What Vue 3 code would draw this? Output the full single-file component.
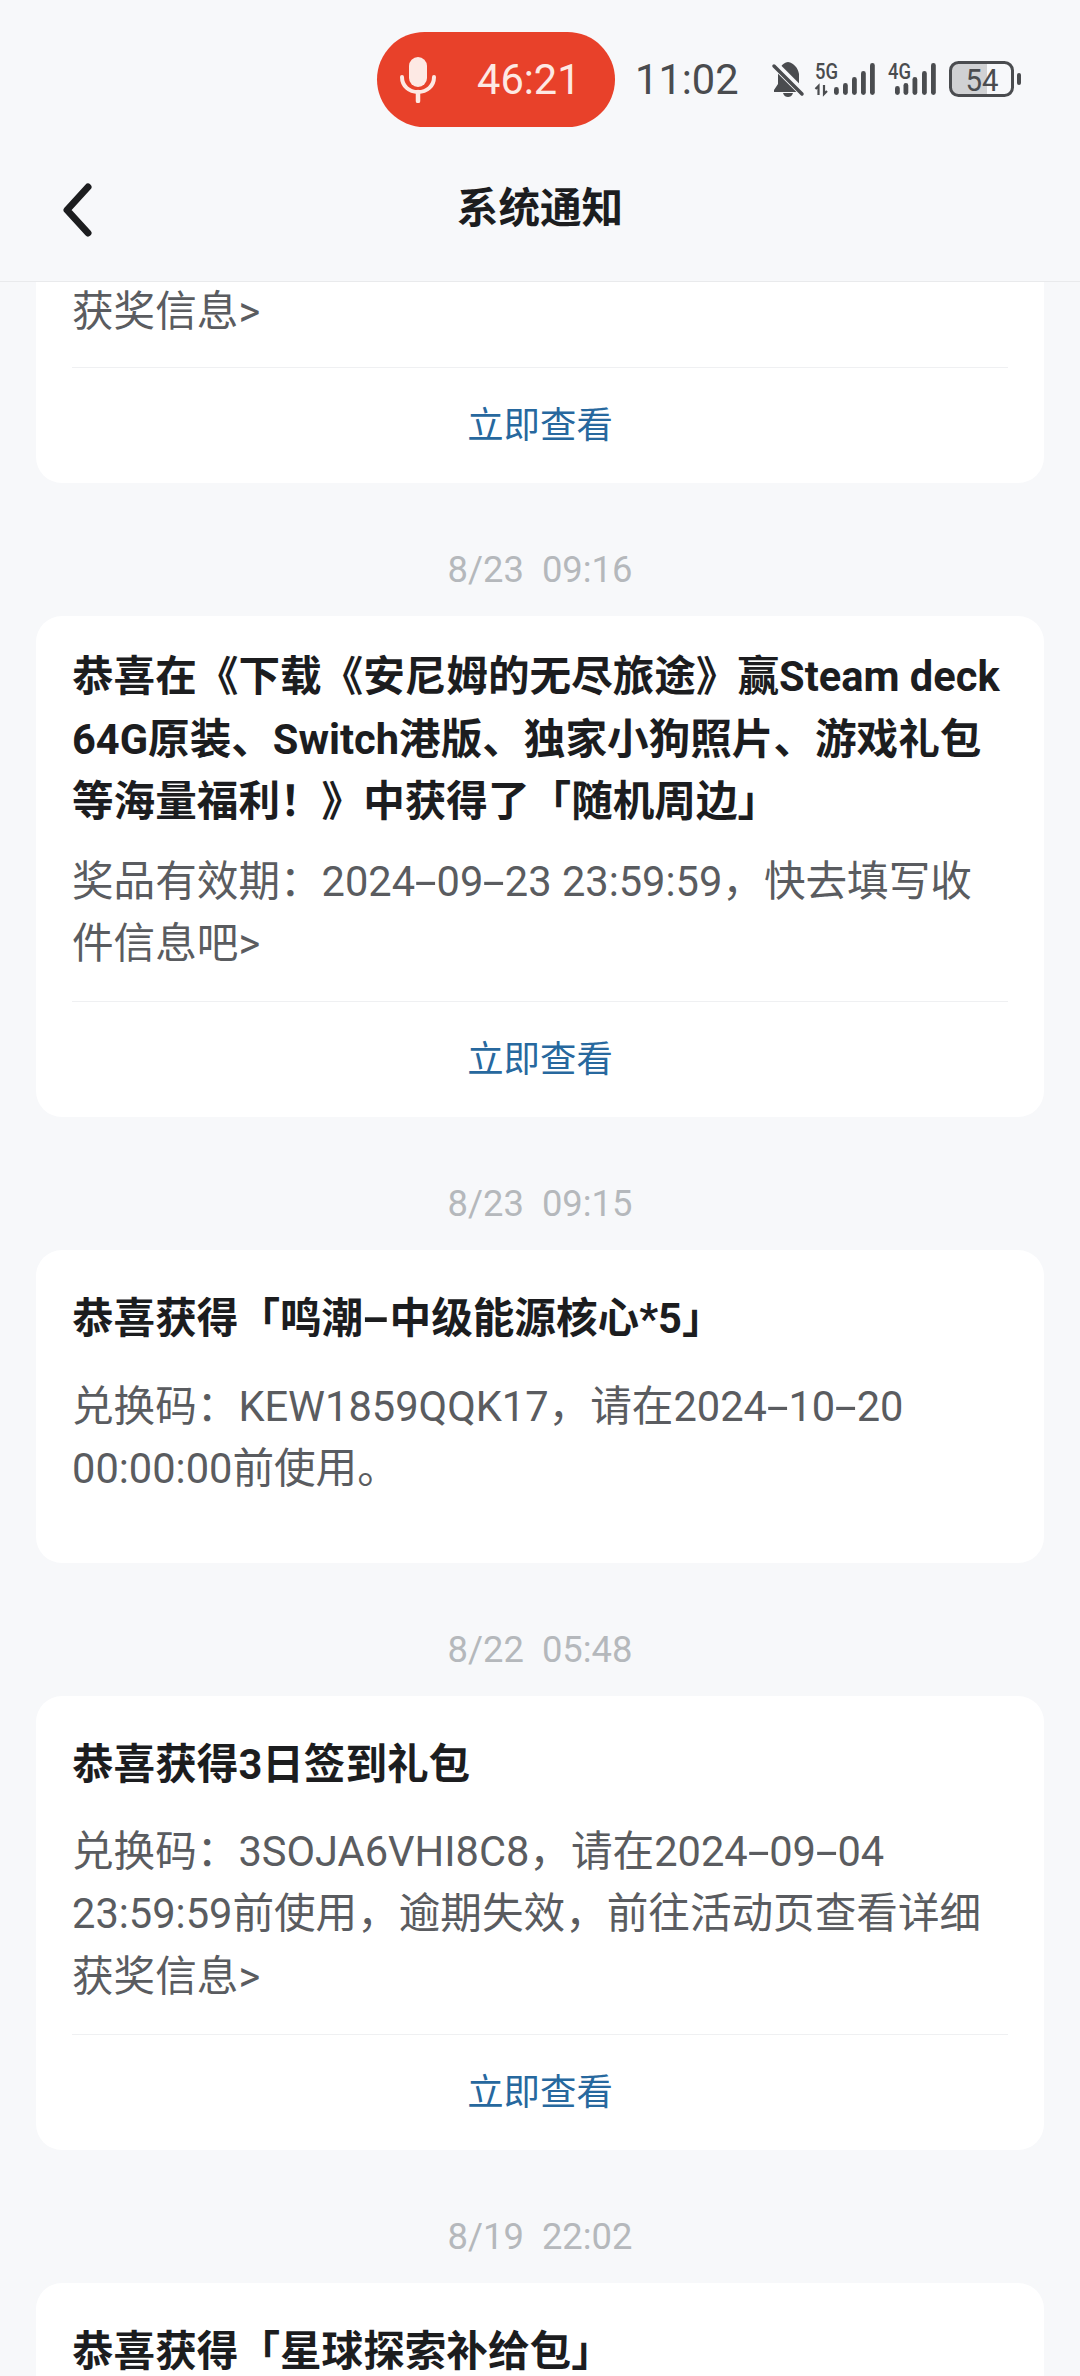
<template>
  <div class="page">
    <div class="top">
      <div class="status">
        <div class="rec">
          <svg class="mic" width="36" height="46" viewBox="0 0 36 46">
            <rect x="9" y="0" width="18" height="30" rx="9" fill="#fde9e4" />
            <path d="M2 20c0 9 7 15 16 15s16-6 16-15" fill="none" stroke="#fde9e4" stroke-width="4" stroke-linecap="round" />
            <path d="M18 35v9" stroke="#fde9e4" stroke-width="4.500" stroke-linecap="round" />
          </svg>
          <span class="rec-time">46:21</span>
        </div>
        <span class="clock">11:02</span>
        <svg class="icons" width="252" height="40" viewBox="0 0 252 40">
          <!-- bell muted -->
          <path d="M18 2c6 1 10 6 11 12v10l4 6v2H4v-2l4-6V14c1-6 4-11 10-12z" fill="#4a4c4f" />
          <path d="M13 33h10c-1 3-3 4-5 4s-4-1-5-4z" fill="#4a4c4f" />
          <path d="M0 0l36 36" stroke="#f7f8fa" stroke-width="8" />
          <path d="M4 6l28 28" stroke="#4a4c4f" stroke-width="3.500" stroke-linecap="round" />
          <!-- 5g + bars -->
          <text x="45" y="19" textLength="23" lengthAdjust="spacingAndGlyphs" class="net">5G</text>
          <path d="M48.500 35v-9l-3 3M54 25v9l3-3" fill="none" stroke="#4a4c4f" stroke-width="2.200" />
          <rect x="64" y="27" width="4.800" height="8" rx="2.400" fill="#4a4c4f" />
          <rect x="73" y="23" width="4.800" height="12" rx="2.400" fill="#4a4c4f" />
          <rect x="82" y="17" width="4.800" height="18" rx="2.400" fill="#4a4c4f" />
          <rect x="91" y="11" width="4.800" height="24" rx="2.400" fill="#4a4c4f" />
          <rect x="100" y="3" width="4.800" height="32" rx="2.400" fill="#4a4c4f" />
          <!-- 4g + bars -->
          <text x="118" y="19" textLength="23" lengthAdjust="spacingAndGlyphs" class="net">4G</text>
          <rect x="125" y="26" width="4.800" height="9" rx="2.400" fill="#4a4c4f" />
          <rect x="133.500" y="23" width="4.800" height="12" rx="2.400" fill="#4a4c4f" />
          <rect x="142.500" y="17" width="4.800" height="18" rx="2.400" fill="#4a4c4f" />
          <rect x="152" y="11" width="4.800" height="24" rx="2.400" fill="#4a4c4f" />
          <rect x="161" y="3" width="4.800" height="32" rx="2.400" fill="#4a4c4f" />
          <!-- battery -->
          <path d="M186 2.500h31v33h-31a6 6 0 0 1-6-6v-21a6 6 0 0 1 6-6z" fill="#d0d1d3" />
          <rect x="180.500" y="2.500" width="62" height="33" rx="8" fill="none" stroke="#4a4c4f" stroke-width="3" />
          <text x="212" y="31" text-anchor="middle" textLength="33" lengthAdjust="spacingAndGlyphs" class="batt">54</text>
          <rect x="247" y="13" width="4" height="12" rx="2" fill="#4a4c4f" />
        </svg>
      </div>
      <div class="bar">
        <svg class="back" width="32" height="54" viewBox="0 0 32 54">
          <path d="M27 4L6 27l21 23" fill="none" stroke="#1c1d1f" stroke-width="7" stroke-linecap="round" stroke-linejoin="round" />
        </svg>
        <span class="bar-title">系统通知</span>
      </div>
    </div>

    <div class="list">
      <template v-for="(m, i) in messages" :key="i">
        <div v-if="m.date" class="date">{{ m.date }}</div>
        <div class="card" :class="{ cut: !m.date && i === 0, single: m.title && m.title.length === 1 }">
          <div v-if="m.title" class="title">
            <div v-for="line in m.title" :key="line">
              <template v-for="(p, j) in dashed(line)" :key="j">
                <span v-if="p === '-'" class="dash">-</span>
                <template v-else>{{ p }}</template>
              </template>
            </div>
          </div>
          <div v-if="m.body" class="body">
            <div v-for="line in m.body" :key="line">
              <template v-for="(p, j) in dashed(line)" :key="j">
                <span v-if="p === '-'" class="dash">-</span>
                <template v-else>{{ p }}</template>
              </template>
            </div>
          </div>
          <div v-if="m.link" class="link">立即查看</div>
        </div>
      </template>
    </div>
  </div>
</template>

<script setup>
const messages = [
  { body: ['获奖信息>'], link: true },
  {
    date: '8/23  09:16',
    title: ['恭喜在《下载《安尼姆的无尽旅途》赢Steam deck', '64G原装、Switch港版、独家小狗照片、游戏礼包', '等海量福利！》中获得了「随机周边」'],
    body: ['奖品有效期：2024-09-23 23:59:59，快去填写收', '件信息吧>'],
    link: true
  },
  {
    date: '8/23  09:15',
    title: ['恭喜获得「鸣潮-中级能源核心*5」'],
    body: ['兑换码：KEW1859QQK17，请在2024-10-20', '00:00:00前使用。']
  },
  {
    date: '8/22  05:48',
    title: ['恭喜获得3日签到礼包'],
    body: ['兑换码：3SOJA6VHI8C8，请在2024-09-04', '23:59:59前使用，逾期失效，前往活动页查看详细', '获奖信息>'],
    link: true
  },
  {
    date: '8/19  22:02',
    title: ['恭喜获得「星球探索补给包」']
  }
]

// the hyphens in the screenshot are much wider than Roboto's
const dashed = (line) => line.split(/(-)/)
</script>

<style scoped>
.page {
  width: 1080px;
  height: 2376px;
  overflow: hidden;
  display: flex;
  flex-direction: column;
  background: #f7f8fa;
  font-family: Roboto, "Noto Sans CJK SC", sans-serif;
  text-spacing-trim: space-all;
}

.top {
  height: 282px;
  flex-shrink: 0;
  box-sizing: border-box;
  border-bottom: 1px solid #e9eaec;
  background: #f7f8fa;
  position: relative;
  z-index: 1;
}

.status {
  height: 127px;
  padding: 32px 0 0 377px;
  box-sizing: border-box;
  display: flex;
  align-items: flex-start;
}

.rec {
  width: 238px;
  height: 95px;
  border-radius: 48px;
  background: #e8412a;
  display: flex;
  align-items: center;
  padding-left: 23px;
  box-sizing: border-box;
}

.mic {
  flex-shrink: 0;
}

.rec-time {
  margin-left: 41px;
  font-size: 41.6px;
  color: #fde9e4;
}

.clock {
  margin-left: 20px;
  width: 118px;
  font-size: 41.6px;
  line-height: 95px;
  color: #4a4c4f;
}

.icons {
  margin: 28px 0 0 17px;
}

.net {
  font-size: 22px;
  font-weight: 500;
  fill: #4a4c4f;
  font-family: Roboto, sans-serif;
}

.batt {
  font-size: 32px;
  fill: #4a4c4f;
  font-family: Roboto, sans-serif;
}

.bar {
  height: 154px;
  padding-top: 2px;
  box-sizing: border-box;
  display: flex;
  align-items: center;
  justify-content: center;
  position: relative;
}

.back {
  position: absolute;
  left: 61px;
  top: 56px;
}

.bar-title {
  font-size: 41.6px;
  font-weight: 700;
  color: #1c1d1f;
}

.list {
  flex: 1;
  padding: 0 36px;
  overflow: hidden;
}

.date {
  height: 133px;
  padding-top: 65px;
  box-sizing: border-box;
  line-height: 44px;
  text-align: center;
  font-size: 36.4px;
  color: #b5b8bc;
  white-space: pre;
}

.card {
  background: #fff;
  border-radius: 26px;
  padding: 30px 36px 0;
}

.card:last-child {
  min-height: 200px;
}

.card.cut {
  border-radius: 0 0 26px 26px;
  padding-top: 0;
  margin-top: -4px;
}

.title {
  font-size: 41.6px;
  line-height: 62.4px;
  font-weight: 700;
  color: #1c1d1f;
  white-space: nowrap;
}

.card.single .title {
  padding: 8px 0;
}

.body {
  margin-top: 17px;
  font-size: 41.6px;
  line-height: 62.4px;
  color: #5a5c60;
  white-space: nowrap;
  padding-bottom: 62px;
}

.card:has(.link) .body {
  padding-bottom: 26px;
}

.card.cut .body {
  margin-top: 3px;
  padding-bottom: 24px;
}

.dash {
  display: inline-block;
  margin: 0 5px;
  transform: scaleX(1.9);
}

.link {
  height: 116px;
  line-height: 115px;
  border-top: 1px solid #eff0f2;
  box-sizing: border-box;
  text-align: center;
  font-size: 36.4px;
  color: #27689e;
}
</style>
